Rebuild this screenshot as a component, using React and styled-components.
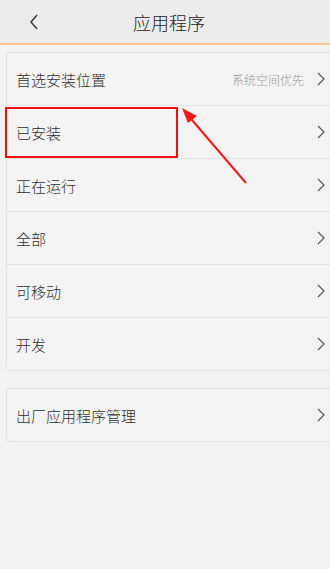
import React from 'react'
import styled, { createGlobalStyle } from 'styled-components'

const sections = [
  [
    { label: '首选安装位置', value: '系统空间优先' },
    { label: '已安装' },
    { label: '正在运行' },
    { label: '全部' },
    { label: '可移动' },
    { label: '开发' },
  ],
  [{ label: '出厂应用程序管理' }],
]

const Chevron = () => (
  <svg width="10" height="16" viewBox="0 0 10 16">
    <path d="M2 2 L8 8 L2 14" fill="none" stroke="#555" strokeWidth="1.2" />
  </svg>
)

const App = () => {
  return (
    <Page>
      <Global />
      <Header>
        <Back>
          <svg width="12" height="18" viewBox="0 0 12 18">
            <path d="M9 2 L3 9 L9 16" fill="none" stroke="#333" strokeWidth="1.4" />
          </svg>
        </Back>
        <Title>应用程序</Title>
      </Header>
      <Body>
        {sections.map((rows, i) => (
          <Card key={i}>
            {rows.map(r => (
              <Row key={r.label}>
                <Label>{r.label}</Label>
                {r.value && <Value>{r.value}</Value>}
                <Chevron />
              </Row>
            ))}
          </Card>
        ))}
      </Body>
      <Highlight />
      <Arrow width="80" height="90" viewBox="0 0 80 90">
        <line x1="70" y1="80" x2="10" y2="10" stroke="#f01818" strokeWidth="2" />
        <path d="M6 5 L21 13 L12 20 Z" fill="#f01818" />
      </Arrow>
    </Page>
  )
}

export default App

const Global = createGlobalStyle`
body{
  margin:0;
  background:#f2f2f2;
  font-family:"Noto Sans CJK SC","Noto Sans",sans-serif;
}
`

const Page = styled.div`
position:relative;
width:330px;
height:569px;
overflow:hidden;
background:#f2f2f2;
`

const Header = styled.div`
height:43px;
display:flex;
align-items:center;
justify-content:center;
position:relative;
background:#ececec;
border-bottom:2px solid #fbc591;
`

const Back = styled.div`
position:absolute;
left:28px;
top:12px;
`

const Title = styled.div`
font-size:18px;
font-weight:300;
color:#222;
margin-left:8px;
`

const Body = styled.div`
display:flex;
flex-direction:column;
gap:17px;
padding:7px 0 0 6px;
`

const Card = styled.div`
margin-right:-8px;
background:#f3f3f3;
border:1px solid #e2e2e2;
border-radius:4px;
`

const Row = styled.div`
box-sizing:border-box;
height:53px;
display:flex;
align-items:center;
padding:0 0 0 9px;
border-top:1px solid #e4e4e4;
&:first-child{border-top:none;height:52px;}
svg{
  margin-left:12px;
  margin-right:11px;
  flex-shrink:0;
}
`

const Label = styled.span`
flex:1;
font-size:15px;
font-weight:300;
color:#2e2e2e;
`

const Value = styled.span`
font-size:12px;
font-weight:300;
color:#999;
`

const Highlight = styled.div`
position:absolute;
left:5px;
top:107px;
width:169px;
height:47px;
border:2.5px solid #f01010;
`

const Arrow = styled.svg`
position:absolute;
left:176px;
top:103px;
`
